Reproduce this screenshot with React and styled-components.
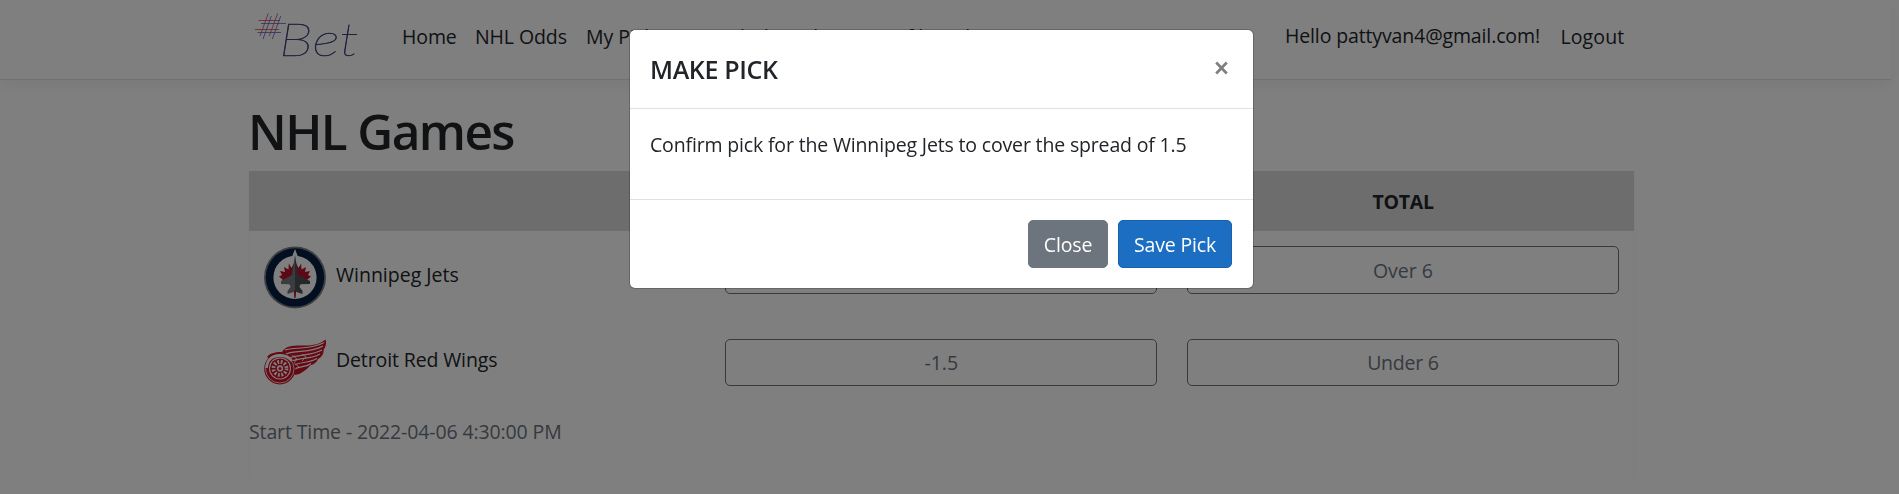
import React from 'react';
import styled, { createGlobalStyle } from 'styled-components';

const GlobalStyle = createGlobalStyle`
  *, *::before, *::after { box-sizing: border-box; }
  body {
    margin: 0;
    background: #fff;
    color: #212529;
    font-family: "Open Sans", "Noto Sans", sans-serif;
    font-size: 19.5px;
    line-height: 30px;
    overflow: hidden;
  }
`;

const Page = styled.div`
  width: 1891px;
  height: 494px;
`;

const Navbar = styled.header`
  height: 80px;
  display: flex;
  justify-content: center;
  border-bottom: 1px solid #dee2e6;
  box-shadow: 0 5px 15px rgba(0, 0, 0, 0.05);
  padding-right: 8px;
`;

const NavInner = styled.div`
  width: 1387px;
  display: flex;
  align-items: flex-start;
`;

const Brand = styled.a`
  display: block;
  width: 120px;
  height: 60px;
  margin: 6px 20px 0 4px;
`;

const NavLinks = styled.nav`
  display: flex;
  flex: 1;
  padding-top: 22px;
`;

const NavLink = styled.a`
  letter-spacing: ${p => p.$spacing || 0}px;
  white-space: nowrap;
  width: ${p => p.$width}px;
  padding-left: 10px;
`;

const Account = styled.div`
  display: flex;
  padding: 22px 0 0;
`;

const Greeting = styled(NavLink)`
  margin-top: -1px;
`;

const Container = styled.main`
  width: 1387px;
  margin: 0 auto;
  position: relative;
  left: -4px;
`;

const Heading = styled.h1`
  margin: 0;
  padding: 21px 0 9px;
  height: 91px;
  font-size: 49.5px;
  font-weight: 600;
  line-height: 60px;
  letter-spacing: -1.6px;
`;

const Card = styled.section`
  height: 311px;
  border: 1px solid #fafbfb;
  border-top: 0;
  border-radius: 0 0 5px 5px;
`;

const OddsRow = styled.div`
  display: grid;
  grid-template-columns: repeat(3, 1fr);
  height: ${p => p.$height}px;
`;

const OddsHeader = styled(OddsRow)`
  background: #dadada;
  align-items: center;
  text-align: center;
  font-weight: 700;
  letter-spacing: -0.3px;
  padding-top: 2px;
`;

const TeamCell = styled.div`
  display: flex;
  align-items: flex-start;
  padding: 15px 15px 0;
  svg { flex: none; display: block; }
`;

const TeamName = styled.span`
  margin: ${p => p.$top}px 0 0 10px;
  letter-spacing: ${p => p.$spacing || 0}px;
`;

const OddsCell = styled.div`
  padding: 15px 15px 0 14.5px;
`;

const OddsButton = styled.button`
  display: block;
  width: 100%;
  height: ${p => p.$height || 48}px;
  padding: ${p => p.$drop || 0}px 0 0;
  font: inherit;
  letter-spacing: ${p => p.$spacing || 0}px;
  color: #6c757d;
  background: transparent;
  border: 1px solid #6c757d;
  border-radius: 5px;
`;

const StartTime = styled.div`
  padding: 17px 0 0;
  color: #6c757d;
  letter-spacing: -0.12px;
`;

const Backdrop = styled.div`
  position: fixed;
  inset: 0;
  background: rgba(0, 0, 0, 0.5);
  display: flex;
  justify-content: center;
  align-items: flex-start;
  padding: 29px 16px 0 0;
`;

const Dialog = styled.div`
  width: 625px;
  height: 260px;
  background: #fff;
  background-clip: padding-box;
  border: 1px solid rgba(0, 0, 0, 0.2);
  border-radius: 6px;
`;

const DialogHeader = styled.div`
  display: flex;
  justify-content: space-between;
  height: 79px;
  padding: 20px 25px 0 20px;
  border-bottom: 1px solid #dee2e6;
`;

const DialogTitle = styled.h5`
  margin: 0;
  font-size: 25px;
  font-weight: 600;
  line-height: 38px;
  letter-spacing: -0.35px;
`;

const CloseIcon = styled.button`
  width: 13px;
  height: 36px;
  padding: 0;
  border: 0;
  background: none;
  display: flex;
  align-items: center;
`;

const DialogBody = styled.div`
  height: 90px;
  padding: 21px 20px 0;
  letter-spacing: -0.16px;
  white-space: nowrap;
`;

const DialogFooter = styled.div`
  display: flex;
  justify-content: flex-end;
  gap: 10px;
  padding: 20px 21px 20px 20px;
  border-top: 1px solid #dee2e6;
`;

const ActionButton = styled.button`
  width: ${p => p.$width}px;
  height: 48px;
  padding: 2px 0 0;
  font: inherit;
  letter-spacing: -0.15px;
  white-space: nowrap;
  color: #fff;
  background: ${p => (p.$primary ? '#1b6ec2' : '#6c757d')};
  border: 1px solid ${p => (p.$primary ? '#1861ac' : '#6c757d')};
  border-radius: 5px;
`;

function HashBetLogo() {
  return (
    <svg width="120" height="60" viewBox="252 6 120 60" fill="none">
      <g stroke="#d04a55" strokeWidth="0.8">
        <path d="M268.3 13.3 260 36M277.7 13.3 269.3 36M258.5 20.5H280M255 29.5H279" />
      </g>
      <g stroke="#5f5fc4" strokeWidth="0.8">
        <path d="M271.3 16 263 39M280.7 16 272.3 39M261 23.5H286M257.5 32.5H281" />
      </g>
      <text
        x="279"
        y="56"
        fontFamily="Lato, sans-serif"
        fontStyle="italic"
        fontWeight="100"
        fontSize="47"
        textLength="80"
        lengthAdjust="spacingAndGlyphs"
        fill="#40407a"
        stroke="#40407a"
        strokeWidth="0.5"
      >
        Bet
      </text>
    </svg>
  );
}

function JetsLogo() {
  return (
    <svg width="62" height="63" viewBox="0 0 62 63">
      <circle cx="31" cy="31.4" r="31" fill="#7b8187" />
      <circle cx="31" cy="31.4" r="29.2" fill="#041e42" />
      <circle cx="31" cy="31.4" r="21.6" fill="#fff" />
      <path d="M31 3 35.2 14H26.8Z" fill="#fff" />
      <path
        d="M31 15 27.5 22 24.8 17.5 24.5 23.5 20 21 21 26 16 25 18 29 15 30.5 19 34 18 37 25 38 30 42 30.4 52H31.6L32 42 37 38 44 37 43 34 47 30.5 44 29 46 25 41 26 42 21 37.5 23.5 37.2 17.5 34.5 22Z"
        fill="#b5122b"
      />
      <path d="M31 9 28.6 24 28 29 17 35V38L26 38.2 26.5 41 23.5 45V48L29.5 46 31 44Z" fill="#75797e" />
      <path d="M31 9 33.4 24 34 29 46 35V38L36 38.2 35.5 41 38.5 45V48L32.5 46 31 44Z" fill="#4d5256" />
      <path d="M29.8 45H32.2L31 52Z" fill="#b5122b" />
    </svg>
  );
}

function RedWingsLogo() {
  return (
    <svg width="62" height="47" viewBox="0 0 62 47" fill="none">
      <path
        d="M3 18C7 13 14 13 18 13C22 6 30 6.5 40 6.5C50 6.5 56 5 61.5 0.5C63 5 61 9 59.5 11C60 14 58 18 54 20C53 23 50 25.5 46 26.5C44 30 40 32 37 34C34 36 31 36 29 35Z"
        fill="#ce1126"
      />
      <g stroke="#fff" strokeWidth="1.2">
        <path d="M21 11C28 8 48 11 60 3.5M22 15C32 11 47 14 59 7" />
        <path d="M25 19C35 15 47 17 58 11M26 23C35 18 46 21 56 15M28 27C36 22 44 25 53 19.5M29 31C36 26 41 29 47 24.5" />
        <path d="M28 16 33 20 30 24 35 28M38 15 42 18 38 22" strokeWidth="0.8" />
      </g>
      <circle cx="15.8" cy="29.8" r="15.6" fill="#ce1126" />
      <circle cx="15.8" cy="29.8" r="14.2" stroke="#fff" strokeWidth="0.8" />
      <path d="M2.5 29C3 21 8 16.5 16 16.5C21 16.5 25 18 28 22" stroke="#fff" strokeWidth="2.8" />
      <circle cx="16" cy="29.4" r="11" fill="#fff" />
      <circle cx="16" cy="29.4" r="10" fill="#ce1126" />
      <circle cx="16" cy="29.4" r="6.5" stroke="#fff" strokeWidth="3.8" strokeDasharray="1.8 1.6" />
      <circle cx="16" cy="29.4" r="3.1" fill="#fff" />
      <circle cx="16" cy="29.4" r="1.5" fill="#ce1126" />
    </svg>
  );
}

export default function App() {
  return (
    <>
      <GlobalStyle />
      <Page>
        <Navbar>
          <NavInner>
            <Brand><HashBetLogo /></Brand>
            <NavLinks>
              <NavLink $width={73} $spacing={-0.1}>Home</NavLink>
              <NavLink $width={111} $spacing={-0.1}>NHL Odds</NavLink>
              <NavLink $width={115}>My Picks</NavLink>
              <NavLink $width={142}>Leaderboard</NavLink>
              <NavLink $width={103}>My Profile</NavLink>
              <NavLink $width={86}>Admin</NavLink>
            </NavLinks>
            <Account>
              <Greeting $width={275.5} $spacing={-0.13}>Hello pattyvan4@gmail.com!</Greeting>
              <NavLink $width={84.5} $spacing={0.1}>Logout</NavLink>
            </Account>
          </NavInner>
        </Navbar>
        <Container>
          <Heading>NHL Games</Heading>
          <Card>
            <OddsHeader $height={60}>
              <span />
              <span>SPREAD</span>
              <span>TOTAL</span>
            </OddsHeader>
            <OddsRow $height={93}>
              <TeamCell>
                <JetsLogo />
                <TeamName $top={13.5}>Winnipeg Jets</TeamName>
              </TeamCell>
              <OddsCell><OddsButton $drop={2}>1.5</OddsButton></OddsCell>
              <OddsCell><OddsButton $drop={2}>Over 6</OddsButton></OddsCell>
            </OddsRow>
            <OddsRow $height={76}>
              <TeamCell>
                <RedWingsLogo />
                <TeamName $top={6} $spacing={-0.12}>Detroit Red Wings</TeamName>
              </TeamCell>
              <OddsCell><OddsButton $height={47} $drop={1}>-1.5</OddsButton></OddsCell>
              <OddsCell><OddsButton $height={47} $drop={1} $spacing={-0.25}>Under 6</OddsButton></OddsCell>
            </OddsRow>
            <StartTime>Start Time - 2022-04-06 4:30:00 PM</StartTime>
          </Card>
        </Container>
      </Page>
      <Backdrop>
        <Dialog role="dialog">
          <DialogHeader>
            <DialogTitle>MAKE PICK</DialogTitle>
            <CloseIcon aria-label="Close">
              <svg width="13" height="14" viewBox="0 0 13 14">
                <path d="M1.2 1.5 11.8 12.5M11.8 1.5 1.2 12.5" stroke="#808080" strokeWidth="2.7" />
              </svg>
            </CloseIcon>
          </DialogHeader>
          <DialogBody>Confirm pick for the Winnipeg Jets to cover the spread of 1.5</DialogBody>
          <DialogFooter>
            <ActionButton $width={80}>Close</ActionButton>
            <ActionButton $width={114} $primary>Save Pick</ActionButton>
          </DialogFooter>
        </Dialog>
      </Backdrop>
    </>
  );
}
